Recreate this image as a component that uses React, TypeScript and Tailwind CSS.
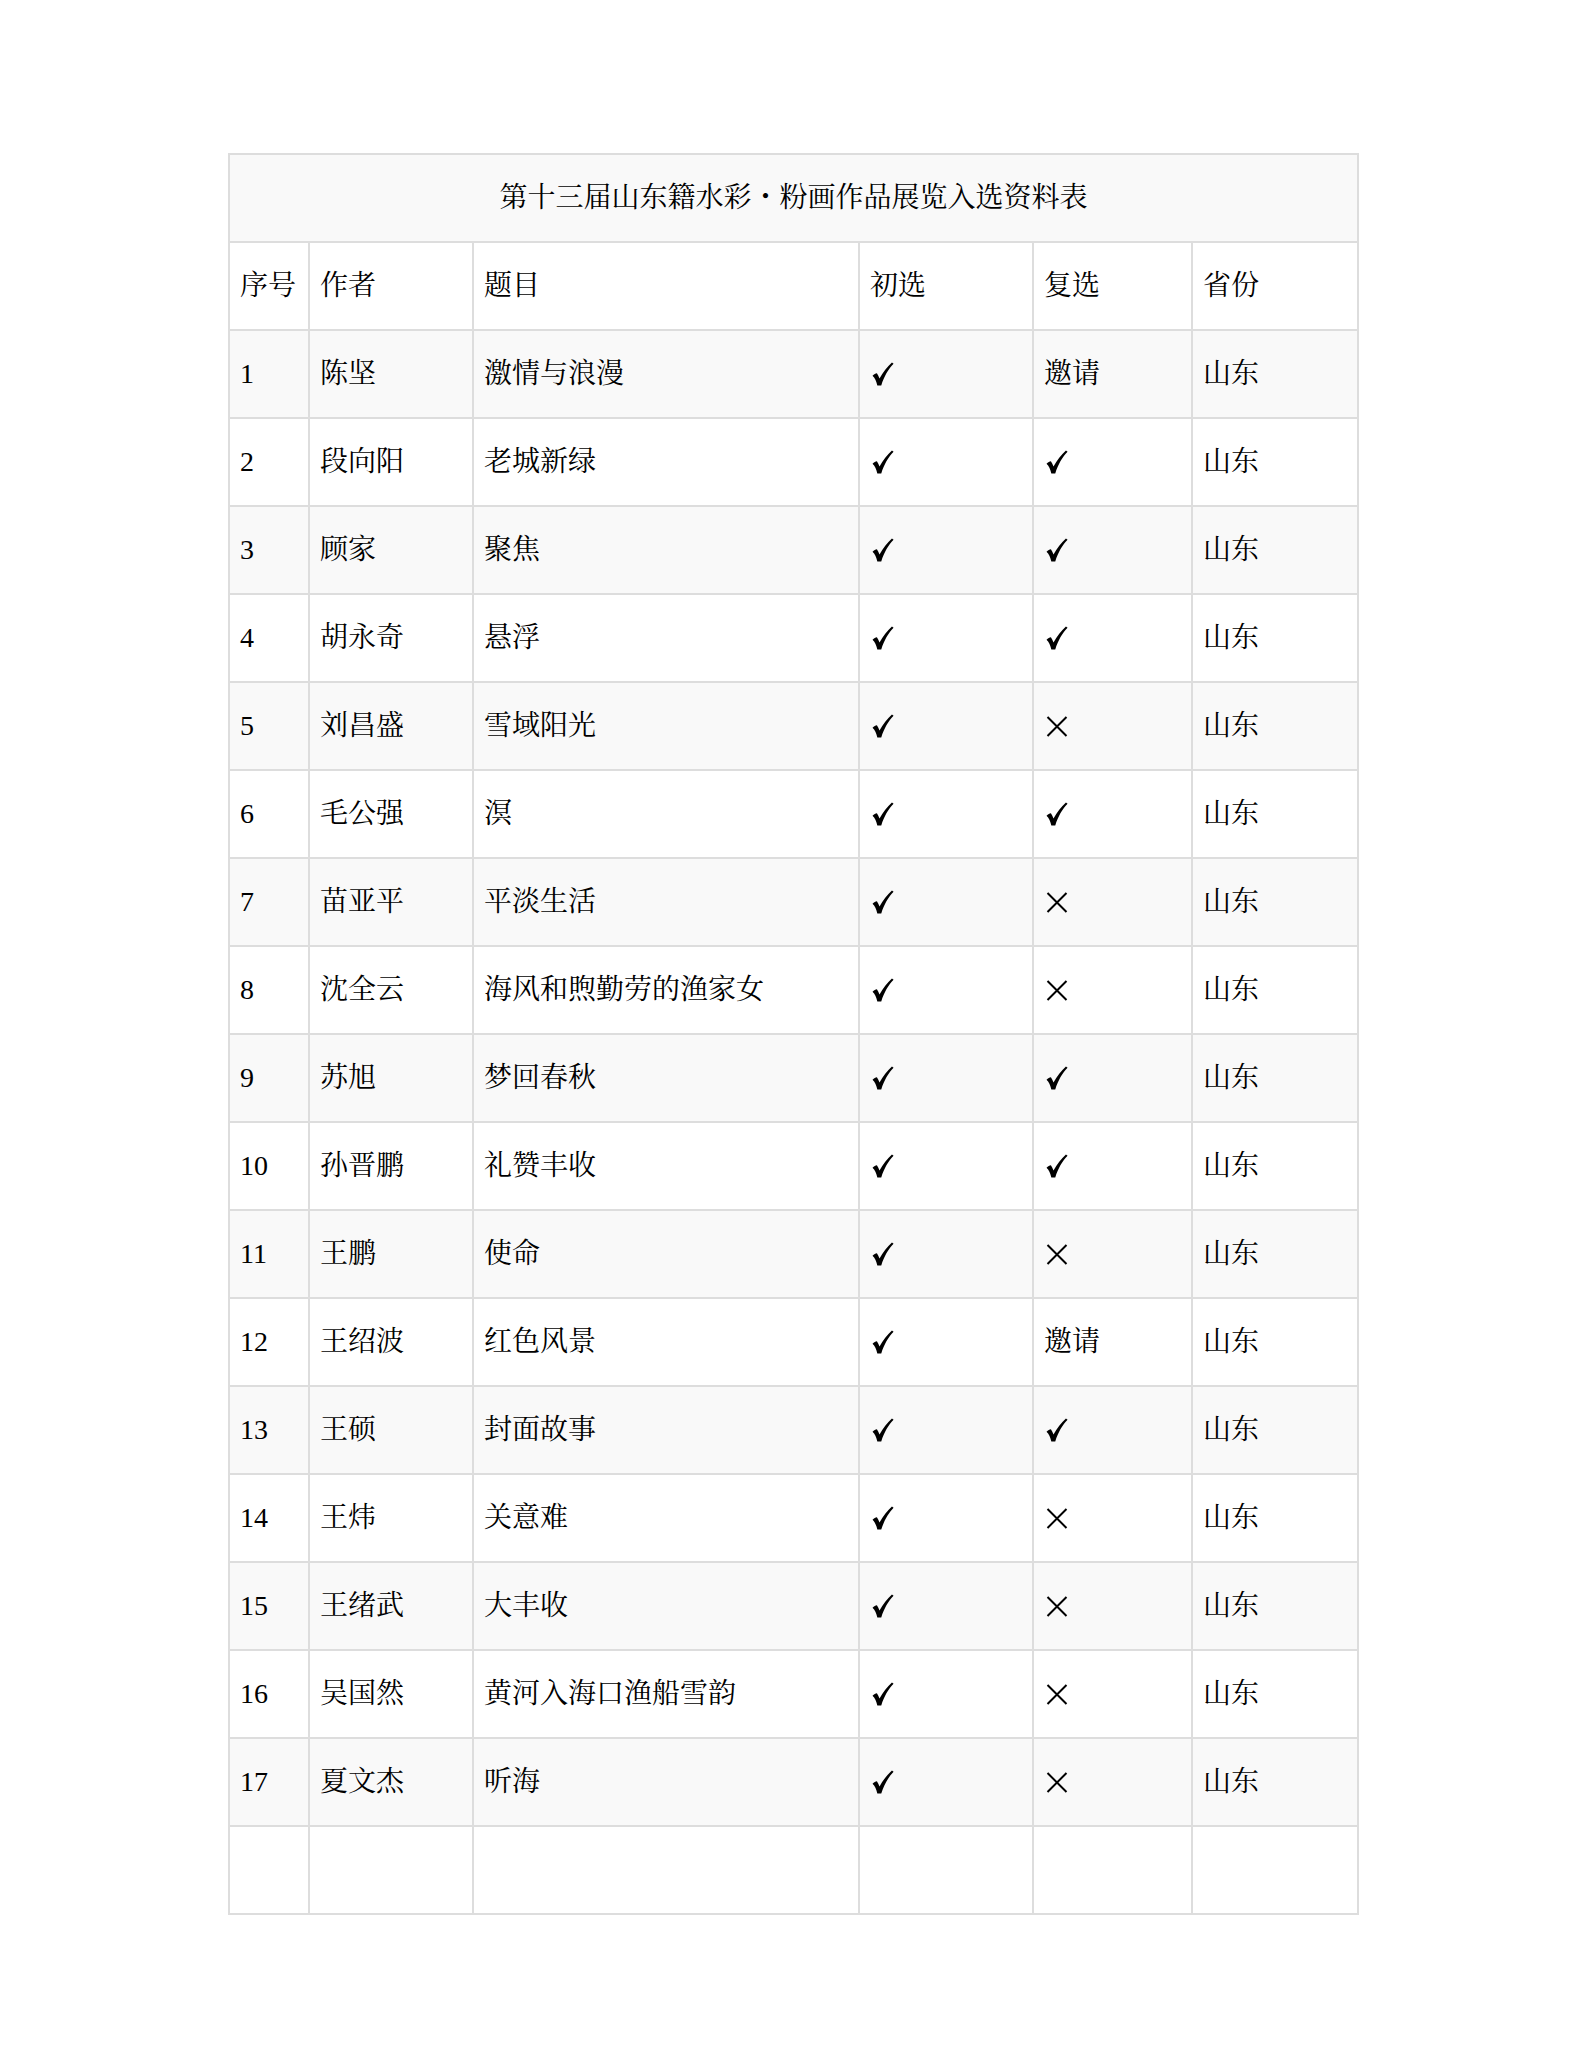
import React from "react";

type Mark = "yes" | "no" | "invite";

type Row = {
  no: number;
  author: string;
  title: string;
  first: Mark;
  second: Mark;
  province: string;
};

const rows: Row[] = [
  { no: 1, author: "陈坚", title: "激情与浪漫", first: "yes", second: "invite", province: "山东" },
  { no: 2, author: "段向阳", title: "老城新绿", first: "yes", second: "yes", province: "山东" },
  { no: 3, author: "顾家", title: "聚焦", first: "yes", second: "yes", province: "山东" },
  { no: 4, author: "胡永奇", title: "悬浮", first: "yes", second: "yes", province: "山东" },
  { no: 5, author: "刘昌盛", title: "雪域阳光", first: "yes", second: "no", province: "山东" },
  { no: 6, author: "毛公强", title: "溟", first: "yes", second: "yes", province: "山东" },
  { no: 7, author: "苗亚平", title: "平淡生活", first: "yes", second: "no", province: "山东" },
  { no: 8, author: "沈全云", title: "海风和煦勤劳的渔家女", first: "yes", second: "no", province: "山东" },
  { no: 9, author: "苏旭", title: "梦回春秋", first: "yes", second: "yes", province: "山东" },
  { no: 10, author: "孙晋鹏", title: "礼赞丰收", first: "yes", second: "yes", province: "山东" },
  { no: 11, author: "王鹏", title: "使命", first: "yes", second: "no", province: "山东" },
  { no: 12, author: "王绍波", title: "红色风景", first: "yes", second: "invite", province: "山东" },
  { no: 13, author: "王硕", title: "封面故事", first: "yes", second: "yes", province: "山东" },
  { no: 14, author: "王炜", title: "关意难", first: "yes", second: "no", province: "山东" },
  { no: 15, author: "王绪武", title: "大丰收", first: "yes", second: "no", province: "山东" },
  { no: 16, author: "吴国然", title: "黄河入海口渔船雪韵", first: "yes", second: "no", province: "山东" },
  { no: 17, author: "夏文杰", title: "听海", first: "yes", second: "no", province: "山东" },
];

function Check() {
  return (
    <svg width="22" height="24" viewBox="0 0 20 22" className="ml-[2px] block">
      <path
        d="M0.4 12.6 C1.8 11.2 3.2 10.4 4.4 10.4 C5.4 11.8 6.1 13.4 6.8 15.2 C10 9.2 13.8 4.4 18.2 0.4 L19.7 1.7 C15 6.4 11 13.2 8.4 21.6 L4.8 21.6 C3.9 17.6 2.5 14.6 0.4 12.6 Z"
        fill="#000"
      />
    </svg>
  );
}

function Cross() {
  return (
    <svg width="22" height="21" viewBox="0 0 22 21" className="ml-[2px] block">
      <path d="M1.5 1 L20.5 20 M20.5 1 L1.5 20" stroke="#000" strokeWidth="2" fill="none" />
    </svg>
  );
}

function MarkCell({ mark }: { mark: Mark }) {
  if (mark === "yes") return <Check />;
  if (mark === "no") return <Cross />;
  return <>邀请</>;
}

const cell = "h-[88px] border-2 border-[#dddddd] px-[10px] align-middle";

export default function App() {
  return (
    <div
      className="min-h-[2066px] bg-white pt-[153px] text-[28px] leading-none text-black"
      style={{ fontFamily: '"Liberation Serif", "Noto Serif CJK SC", "Noto Sans CJK SC", serif' }}
    >
      <table className="mx-auto w-[1129px] table-fixed border-collapse border-2 border-[#dddddd] text-left">
        <colgroup>
          <col className="w-[80px]" />
          <col className="w-[164px]" />
          <col className="w-[386px]" />
          <col className="w-[174px]" />
          <col className="w-[159px]" />
          <col className="w-[166px]" />
        </colgroup>
        <thead>
          <tr className="bg-[#f9f9f9]">
            <th colSpan={6} className={`${cell} text-center font-normal`}>
              第十三届山东籍水彩・粉画作品展览入选资料表
            </th>
          </tr>
          <tr className="bg-white">
            <th className={`${cell} font-normal`}>序号</th>
            <th className={`${cell} font-normal`}>作者</th>
            <th className={`${cell} font-normal`}>题目</th>
            <th className={`${cell} font-normal`}>初选</th>
            <th className={`${cell} font-normal`}>复选</th>
            <th className={`${cell} font-normal`}>省份</th>
          </tr>
        </thead>
        <tbody>
          {rows.map((r, i) => (
            <tr key={r.no} className={i % 2 === 0 ? "bg-[#f9f9f9]" : "bg-white"}>
              <td className={cell}>{r.no}</td>
              <td className={cell}>{r.author}</td>
              <td className={cell}>{r.title}</td>
              <td className={cell}>
                <MarkCell mark={r.first} />
              </td>
              <td className={cell}>
                <MarkCell mark={r.second} />
              </td>
              <td className={cell}>{r.province}</td>
            </tr>
          ))}
          <tr className="bg-white">
            <td className={cell}></td>
            <td className={cell}></td>
            <td className={cell}></td>
            <td className={cell}></td>
            <td className={cell}></td>
            <td className={cell}></td>
          </tr>
        </tbody>
      </table>
    </div>
  );
}
